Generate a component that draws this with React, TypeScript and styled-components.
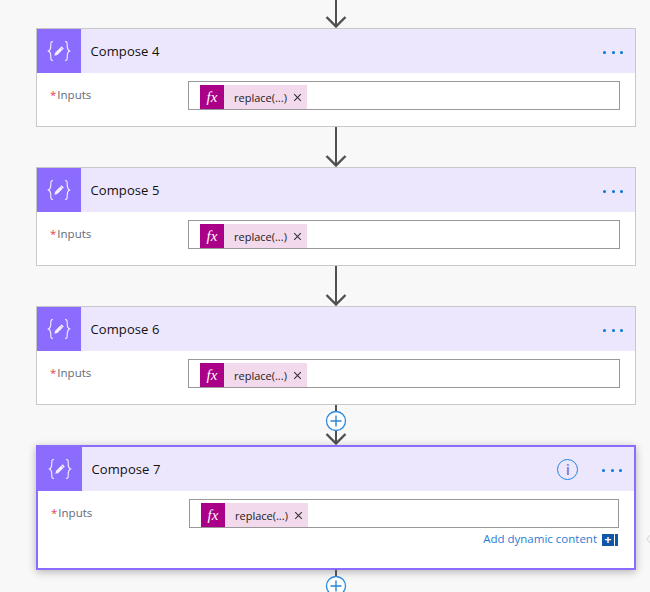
import React from "react";
import styled, { createGlobalStyle } from "styled-components";

const Global = createGlobalStyle`
  html, body { margin: 0; padding: 0; background: #f8f8f8; }
  body { font-family: "Open Sans", "Noto Sans", "Liberation Sans", sans-serif; overflow: hidden; }
`;

const Page = styled.div`
  position: relative;
  width: 650px;
  height: 592px;
  overflow: hidden;
  box-sizing: border-box;
  padding-left: 36px;
  display: flex;
  flex-direction: column;
  align-items: flex-start;
`;

const Card = styled.section<{ $selected?: boolean }>`
  width: 600px;
  box-sizing: border-box;
  flex: none;
  background: #fff;
  border: ${(p) => (p.$selected ? "2px solid #8c6cff" : "1px solid #c8c8c8")};
  box-shadow: ${(p) => (p.$selected ? "0 2px 8px rgba(0,0,0,.28)" : "none")};
`;

const Header = styled.header`
  height: 44px;
  display: flex;
  align-items: center;
  background: #ede7fe;
`;

const IconTile = styled.div`
  width: 44px;
  height: 44px;
  flex: none;
  background: #8c6cff;
  display: flex;
  align-items: center;
  justify-content: center;
`;

const Title = styled.h3`
  margin: 0 0 0 9.5px;
  flex: 1;
  font-size: 13px;
  font-weight: 400;
  letter-spacing: 0.1px;
  line-height: 18px;
  color: #111;
`;

const InfoButton = styled.div`
  width: 21px;
  height: 21px;
  box-sizing: border-box;
  border: 1.3px solid #1f85d8;
  border-radius: 50%;
  margin-right: 24px;
  display: flex;
  align-items: center;
  justify-content: center;
  color: #7f78d8;
  font-size: 15px;
  font-weight: 600;
  line-height: 18px;
`;

const Dots = styled.div`
  display: flex;
  gap: 5.4px;
  margin-right: 12px;
  margin-top: 2px;
`;

const Dot = styled.i`
  width: 3px;
  height: 3px;
  border-radius: 50%;
  background: #0078d4;
`;

const Body = styled.div<{ $selected?: boolean }>`
  display: flex;
  padding: 8px 15px 0 13px;
  height: ${(p) => (p.$selected ? 77 : 53)}px;
  box-sizing: border-box;
`;

const LabelCol = styled.div`
  width: 138px;
  flex: none;
  font-size: 11.5px;
  line-height: 16px;
  color: #5f6a78;
  padding-top: 6px;
`;

const Req = styled.span`
  color: #e8414f;
  margin-right: 1px;
`;

const FieldCol = styled.div`
  flex: 1;
  display: flex;
  flex-direction: column;
`;

const Field = styled.div`
  height: 29px;
  box-sizing: border-box;
  border: 1px solid #989898;
  padding: 3px 0 0 11px;
  background: #fff;
`;

const Chip = styled.div`
  width: 107px;
  height: 24px;
  display: flex;
  align-items: center;
  background: #f2d9ec;
`;

const FxBox = styled.div`
  width: 24px;
  height: 24px;
  flex: none;
  background: #aa0088;
  color: #fff;
  font-family: "Liberation Serif", serif;
  font-style: italic;
  font-size: 15px;
  line-height: 25px;
  text-align: center;
`;

const ChipText = styled.span`
  margin: 2px 0 0 10px;
  font-size: 11px;
  line-height: 16px;
  color: #222;
  width: 56px;
  white-space: nowrap;
`;

const ChipClose = styled.span`
  display: flex;
  margin-left: 3px;
  margin-top: 1px;
`;

const LinkRow = styled.div`
  display: flex;
  justify-content: flex-end;
  align-items: center;
  margin-top: 5px;
  height: 13px;
  padding-right: 1px;
`;

const DynLink = styled.span`
  font-size: 11.5px;
  line-height: 14px;
  color: #2b7cd3;
  margin: 0 5px 2px 0;
  white-space: nowrap;
`;

const DynButton = styled.div`
  display: flex;
  gap: 1px;
  height: 12px;
`;

const DynPlus = styled.div`
  width: 12px;
  height: 12px;
  background: #0f58a8;
  color: #fff;
  font-size: 12px;
  font-weight: 700;
  line-height: 12px;
  text-align: center;
`;

const DynBar = styled.div`
  width: 3px;
  height: 12px;
  background: #0f58a8;
`;

const Connector = styled.svg`
  display: block;
  flex: none;
  margin-left: 285px;
`;

const EdgeHandle = styled.svg`
  position: absolute;
  right: 0;
  top: 533px;
`;

const Arrow = ({ height }: { height: number }) => (
  <Connector width="30" height={height} viewBox={`0 0 30 ${height}`} fill="none">
    <path d={`M15 0V${height - 1}`} stroke="#505050" strokeWidth="2" />
    <path d={`M5.5 ${height - 11}L15 ${height - 1.5}L24.5 ${height - 11}`} stroke="#505050" strokeWidth="2.4" />
  </Connector>
);

const PlusArrow = () => (
  <Connector width="30" height="40" viewBox="0 0 30 40" fill="none">
    <path d="M15 0V39" stroke="#505050" strokeWidth="2" />
    <path d="M5.5 29L15 38.5L24.5 29" stroke="#505050" strokeWidth="2.4" />
    <circle cx="15" cy="16" r="9.5" fill="#fff" stroke="#2b8ae0" strokeWidth="1.3" />
    <path d="M15 10.5V21.5M9.5 16H20.5" stroke="#2b86d8" strokeWidth="1.4" />
  </Connector>
);

const PlusEnd = () => (
  <Connector width="30" height="22" viewBox="0 0 30 22" fill="none">
    <path d="M15 0V8" stroke="#505050" strokeWidth="2" />
    <circle cx="15" cy="16" r="9.5" fill="#fff" stroke="#2b8ae0" strokeWidth="1.3" />
    <path d="M15 10.5V21.5M9.5 16H20.5" stroke="#2b86d8" strokeWidth="1.4" />
  </Connector>
);

const ComposeIcon = () => (
  <svg width="24" height="22" viewBox="0 0 24 22" fill="none">
    <path d="M6 1.5C3.6 1.5 3.8 3.2 3.8 5.5C3.8 8 3.6 10 1.4 11C3.6 12 3.8 14 3.8 16.5C3.8 18.8 3.6 20.5 6 20.5" stroke="#fff" strokeWidth="1.1" opacity=".9" />
    <path d="M18 1.5C20.4 1.5 20.2 3.2 20.2 5.5C20.2 8 20.4 10 22.6 11C20.4 12 20.2 14 20.2 16.5C20.2 18.8 20.4 20.5 18 20.5" stroke="#fff" strokeWidth="1.1" opacity=".9" />
    <path d="M14.6 6.3L16.8 8.5L10.3 15L7.4 15.7L8.1 12.8Z" fill="#fff" opacity=".9" />
    <path d="M13.4 7.6L15.5 9.7" stroke="#8c6cff" strokeWidth=".6" />
  </svg>
);

const CloseIcon = () => (
  <svg width="9" height="9" viewBox="0 0 9 9" fill="none">
    <path d="M1.2 1.2L7.8 7.8M7.8 1.2L1.2 7.8" stroke="#333" strokeWidth="1.1" />
  </svg>
);

const ComposeCard = ({ n, selected }: { n: number; selected?: boolean }) => (
  <Card $selected={selected}>
    <Header>
      <IconTile>
        <ComposeIcon />
      </IconTile>
      <Title>Compose {n}</Title>
      {selected && <InfoButton>i</InfoButton>}
      <Dots>
        <Dot />
        <Dot />
        <Dot />
      </Dots>
    </Header>
    <Body $selected={selected}>
      <LabelCol>
        <Req>*</Req>Inputs
      </LabelCol>
      <FieldCol>
        <Field>
          <Chip>
            <FxBox>fx</FxBox>
            <ChipText>replace(...)</ChipText>
            <ChipClose>
              <CloseIcon />
            </ChipClose>
          </Chip>
        </Field>
        {selected && (
          <LinkRow>
            <DynLink>Add dynamic content</DynLink>
            <DynButton>
              <DynPlus>+</DynPlus>
              <DynBar />
            </DynButton>
          </LinkRow>
        )}
      </FieldCol>
    </Body>
  </Card>
);

export default function App() {
  return (
    <>
      <Global />
      <Page>
        <Arrow height={28} />
        <ComposeCard n={4} />
        <Arrow height={40} />
        <ComposeCard n={5} />
        <Arrow height={40} />
        <ComposeCard n={6} />
        <PlusArrow />
        <ComposeCard n={7} selected />
        <PlusEnd />
        <EdgeHandle width="4" height="12" viewBox="0 0 4 12" fill="none">
          <path d="M4 2L0.8 6L4 10" stroke="#dcdcdc" strokeWidth="1.2" />
        </EdgeHandle>
      </Page>
    </>
  );
}
